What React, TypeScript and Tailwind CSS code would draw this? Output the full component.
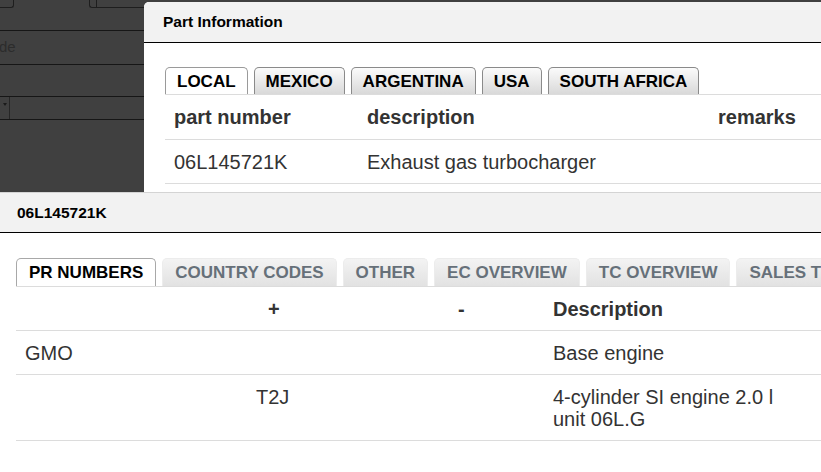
const countryTabs = ["LOCAL", "MEXICO", "ARGENTINA", "USA", "SOUTH AFRICA"];
const detailTabs = ["PR NUMBERS", "COUNTRY CODES", "OTHER", "EC OVERVIEW", "TC OVERVIEW", "SALES TEXT"];

const prRows = [
  { base: "GMO", plus: "", minus: "", description: ["Base engine"] },
  { base: "", plus: "T2J", minus: "", description: ["4-cylinder SI engine 2.0 l", "unit 06L.G"] },
];

function Backdrop() {
  return (
    <div className="w-[144px] shrink-0 flex flex-col text-[#2c2c2c]">
      {/* toolbar buttons dimmed behind the dialog */}
      <div className="h-[31px] border-b border-[#161616] flex">
        <div className="w-[14px] h-[8px] border-b border-r border-[#1e1e1e] rounded-br-[3px]" />
        <div className="ml-[75px] flex-1 h-[8px] border-b border-l border-[#1e1e1e] rounded-bl-[3px] flex">
          <div className="ml-[6px] h-full border-l border-[#1e1e1e]" />
        </div>
      </div>
      <div className="h-[34px] border-b border-[#161616] flex items-center text-[15px] -ml-[1px]">
        de
      </div>
      <div className="h-[32px] border-b border-[#161616]" />
      <div className="h-[23px] border-b border-[#161616] flex">
        <div className="w-[10px] border-r border-[#262626] flex items-start justify-end pt-[6px] pr-[2px]">
          <div className="w-0 h-0 border-l-[2px] border-r-[2px] border-t-[3px] border-l-transparent border-r-transparent border-t-[#1a1a1a]" />
        </div>
      </div>
    </div>
  );
}

function CountryTab({ label, active }: { label: string; active: boolean }) {
  return (
    <div
      className={`h-[27px] px-[11px] flex items-center border border-b-0 rounded-t-[5px] text-[17px] font-bold leading-none text-black ${
        active
          ? "bg-white border-[#9a9a9a]"
          : "bg-gradient-to-b from-[#fbfbfb] to-[#d9d9d9] border-[#8a8a8a]"
      }`}
    >
      {label}
    </div>
  );
}

function DetailTab({ label, active }: { label: string; active: boolean }) {
  return (
    <div
      className={`h-[28px] px-[12px] shrink-0 flex items-center border border-b-0 rounded-t-[5px] text-[17px] font-bold leading-none ${
        active
          ? "bg-white border-[#a8a8a8] text-black"
          : "bg-gradient-to-b from-[#f3f3f3] to-[#e2e2e2] border-[#ececec] text-[#667079]"
      }`}
    >
      {label}
    </div>
  );
}

export default function App() {
  return (
    <div className="w-[821px] h-[472px] overflow-hidden bg-white font-['Liberation_Sans',Arial,sans-serif] text-[#333]">
      {/* dialog over the dimmed page */}
      <div className="h-[192px] flex bg-[#404040] overflow-hidden">
        <Backdrop />
        <div className="flex-1 min-w-0 mt-[2px] bg-white rounded-tl-[5px] overflow-hidden">
          <div className="h-[41px] bg-[#f2f2f2] border-b border-black flex items-center pl-[19px] text-[15.5px] font-bold text-black">
            Part Information
          </div>
          <div className="pl-[21px] pt-[24px]">
            <div className="flex gap-[6px] border-b border-[#dcdcdc]">
              {countryTabs.map((t, i) => (
                <CountryTab key={t} label={t} active={i === 0} />
              ))}
            </div>
            <div className="grid grid-cols-[193px_351px_1fr] text-[20px]">
              <div className="h-[45px] flex items-center pl-[9px] font-bold border-b border-[#dcdcdc]">part number</div>
              <div className="h-[45px] flex items-center pl-[9px] font-bold border-b border-[#dcdcdc]">description</div>
              <div className="h-[45px] flex items-center pl-[9px] font-bold border-b border-[#dcdcdc]">remarks</div>
              <div className="h-[44px] flex items-center pl-[9px] border-b border-[#dcdcdc]">06L145721K</div>
              <div className="h-[44px] flex items-center pl-[9px] border-b border-[#dcdcdc]">Exhaust gas turbocharger</div>
              <div className="h-[44px] border-b border-[#dcdcdc]" />
            </div>
          </div>
        </div>
      </div>

      {/* part detail panel */}
      <div className="h-[41px] bg-[#f2f2f2] border-t border-[#d4d4d4] border-b border-b-black flex items-center pl-[17px] text-[15.5px] font-bold text-black">
        06L145721K
      </div>
      <div className="pl-[16px] pt-[25px]">
        <div className="flex gap-[6px] border-b border-[#dcdcdc] overflow-hidden">
          {detailTabs.map((t, i) => (
            <DetailTab key={t} label={t} active={i === 0} />
          ))}
        </div>
        <div className="grid grid-cols-[231px_197px_100px_1fr] text-[20px] leading-[22px]">
          <div className="h-[44px] border-b border-[#dcdcdc]" />
          <div className="h-[44px] flex items-center pl-[21px] font-bold border-b border-[#dcdcdc]">+</div>
          <div className="h-[44px] flex items-center pl-[14px] font-bold border-b border-[#dcdcdc]">-</div>
          <div className="h-[44px] flex items-center pl-[9px] font-bold border-b border-[#dcdcdc]">Description</div>
          {prRows.map((r) => (
            <div key={r.base + r.plus} className="contents">
              <div className="pt-[11px] pb-[10px] pl-[9px] border-b border-[#dcdcdc]">{r.base}</div>
              <div className="pt-[11px] pb-[10px] pl-[9px] border-b border-[#dcdcdc]">{r.plus}</div>
              <div className="pt-[11px] pb-[10px] pl-[9px] border-b border-[#dcdcdc]">{r.minus}</div>
              <div className="pt-[11px] pb-[10px] pl-[9px] pr-[30px] border-b border-[#dcdcdc]">
                {r.description.map((line) => (
                  <div key={line}>{line}</div>
                ))}
              </div>
            </div>
          ))}
        </div>
      </div>
    </div>
  );
}
